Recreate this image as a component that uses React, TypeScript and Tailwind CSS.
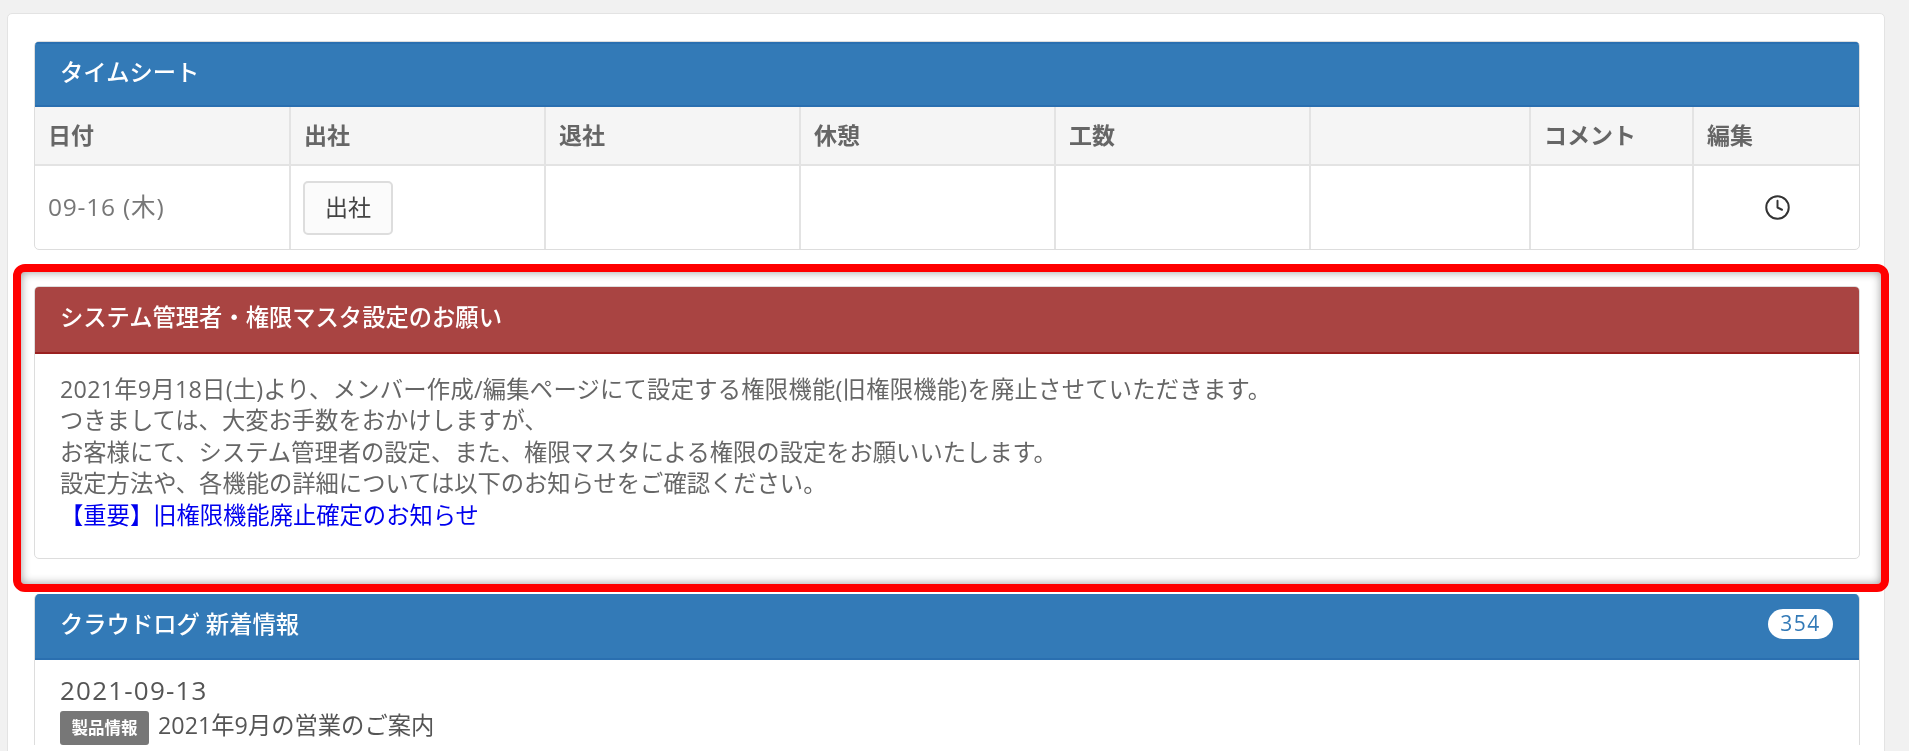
import { Clock } from 'lucide-react';

const font = { fontFamily: '"Open Sans", "Noto Sans CJK JP", sans-serif' };

// 列幅は左から順に
const columns = [
  { label: '日付', width: 'w-[255px]' },
  { label: '出社', width: 'w-[255px]' },
  { label: '退社', width: 'w-[255px]' },
  { label: '休憩', width: 'w-[255px]' },
  { label: '工数', width: 'w-[255px]' },
  { label: '', width: 'w-[220px]' },
  { label: 'コメント', width: 'w-[163px]' },
  { label: '編集', width: '' },
];

function TimeSheet() {
  return (
    <section className="rounded-[5px] border border-[#ddd] overflow-hidden">
      <h2 className="h-[65px] bg-[#337ab7] border-t-2 border-b-2 border-[#2a6fb0] pl-[25px] pb-1 flex items-center text-[23.3px] font-medium text-white">
        タイムシート
      </h2>
      <table className="w-full table-fixed border-collapse">
        <thead>
          <tr className="h-[58px] bg-[#f5f5f5]">
            {columns.map((c, i) => (
              <th
                key={i}
                className={`${c.width} border-b-2 border-r-2 last:border-r-0 border-[#e3e3e3] px-[13px] text-left text-[23px] font-semibold text-[#666]`}
              >
                {c.label}
              </th>
            ))}
          </tr>
        </thead>
        <tbody>
          <tr className="h-[84px]">
            <td className="border-r-2 border-[#e3e3e3] px-[13px] text-[24.5px] tracking-[0.8px] text-[#777]">09-16 (木)</td>
            <td className="border-r-2 border-[#e3e3e3] px-[12px]">
              <button className="h-[54px] w-[90px] rounded-[5px] border-2 border-[#ddd] bg-[#fbfbfb] text-[23px] text-[#444]">
                出社
              </button>
            </td>
            <td className="border-r-2 border-[#e3e3e3]" />
            <td className="border-r-2 border-[#e3e3e3]" />
            <td className="border-r-2 border-[#e3e3e3]" />
            <td className="border-r-2 border-[#e3e3e3]" />
            <td className="border-r-2 border-[#e3e3e3]" />
            <td className="pl-[70px]">
              <Clock className="w-[27px] h-[27px] text-[#333]" strokeWidth={1.75} />
            </td>
          </tr>
        </tbody>
      </table>
    </section>
  );
}

function Notice() {
  return (
    <div className="relative mt-[14px] -ml-[21px] -mr-[29px] rounded-[12px] border-[8px] border-[#ff0000] bg-white pl-[13px] pr-[21px] pt-[14px] pb-[25px] shadow-[inset_0_0_10px_rgba(0,0,0,0.4)]">
      <section className="rounded-[5px] border border-[#ddd] overflow-hidden">
        <h2 className="h-[67px] bg-[#a94442] border-b-2 border-[#9a2020] pl-[25px] pb-1 flex items-center text-[23.3px] font-medium text-white">
          システム管理者・権限マスタ設定のお願い
        </h2>
        <div className="h-[204px] pl-[25px] pt-[20px] text-[23.3px] leading-[31.4px] text-[#666]">
          <p className="tracking-[0.25px]">2021年9月18日(土)より、メンバー作成/編集ページにて設定する権限機能(旧権限機能)を廃止させていただきます。</p>
          <p>つきましては、大変お手数をおかけしますが、</p>
          <p>お客様にて、システム管理者の設定、また、権限マスタによる権限の設定をお願いいたします。</p>
          <p>設定方法や、各機能の詳細については以下のお知らせをご確認ください。</p>
          <a href="#" className="text-[#0000ee]">【重要】旧権限機能廃止確定のお知らせ</a>
        </div>
      </section>
    </div>
  );
}

function News() {
  return (
    <section className="mt-[2px] rounded-t-[5px] border-x border-[#ddd] overflow-hidden">
      <h2 className="h-[66px] bg-[#337ab7] border-b-2 border-[#2a6fb0] pl-[25px] pr-[26px] pb-1 flex items-center justify-between text-[23.3px] font-medium text-white">
        <span>クラウドログ 新着情報</span>
        <span className="h-[30px] w-[65px] rounded-full bg-white text-[#337ab7] text-[21px] tracking-[1.5px] leading-[28px] text-center">
          354
        </span>
      </h2>
      <div className="pl-[25px] pt-[13px] text-[#555]">
        <p className="text-[26px] leading-[34px] tracking-[1.2px]">2021-09-13</p>
        <p className="mt-[4px] flex items-center gap-[9px] text-[23.3px] leading-[34px]">
          <span className="h-[34px] w-[89px] rounded-[3px] bg-[#777] text-white text-[16.5px] font-bold leading-[34px] text-center">
            製品情報
          </span>
          <span className="-mt-[6px]">2021年9月の営業のご案内</span>
        </p>
      </div>
    </section>
  );
}

export default function App() {
  return (
    <div style={font} className="h-[751px] overflow-hidden bg-[#f1f1f1] pt-[13px] pl-[7px] pr-6 blur-[0.5px]">
      <main className="h-[800px] rounded-[5px] border border-[#e3e3e3] bg-white pl-[26px] pr-6 pt-[27px]">
        <TimeSheet />
        <Notice />
        <News />
      </main>
    </div>
  );
}
